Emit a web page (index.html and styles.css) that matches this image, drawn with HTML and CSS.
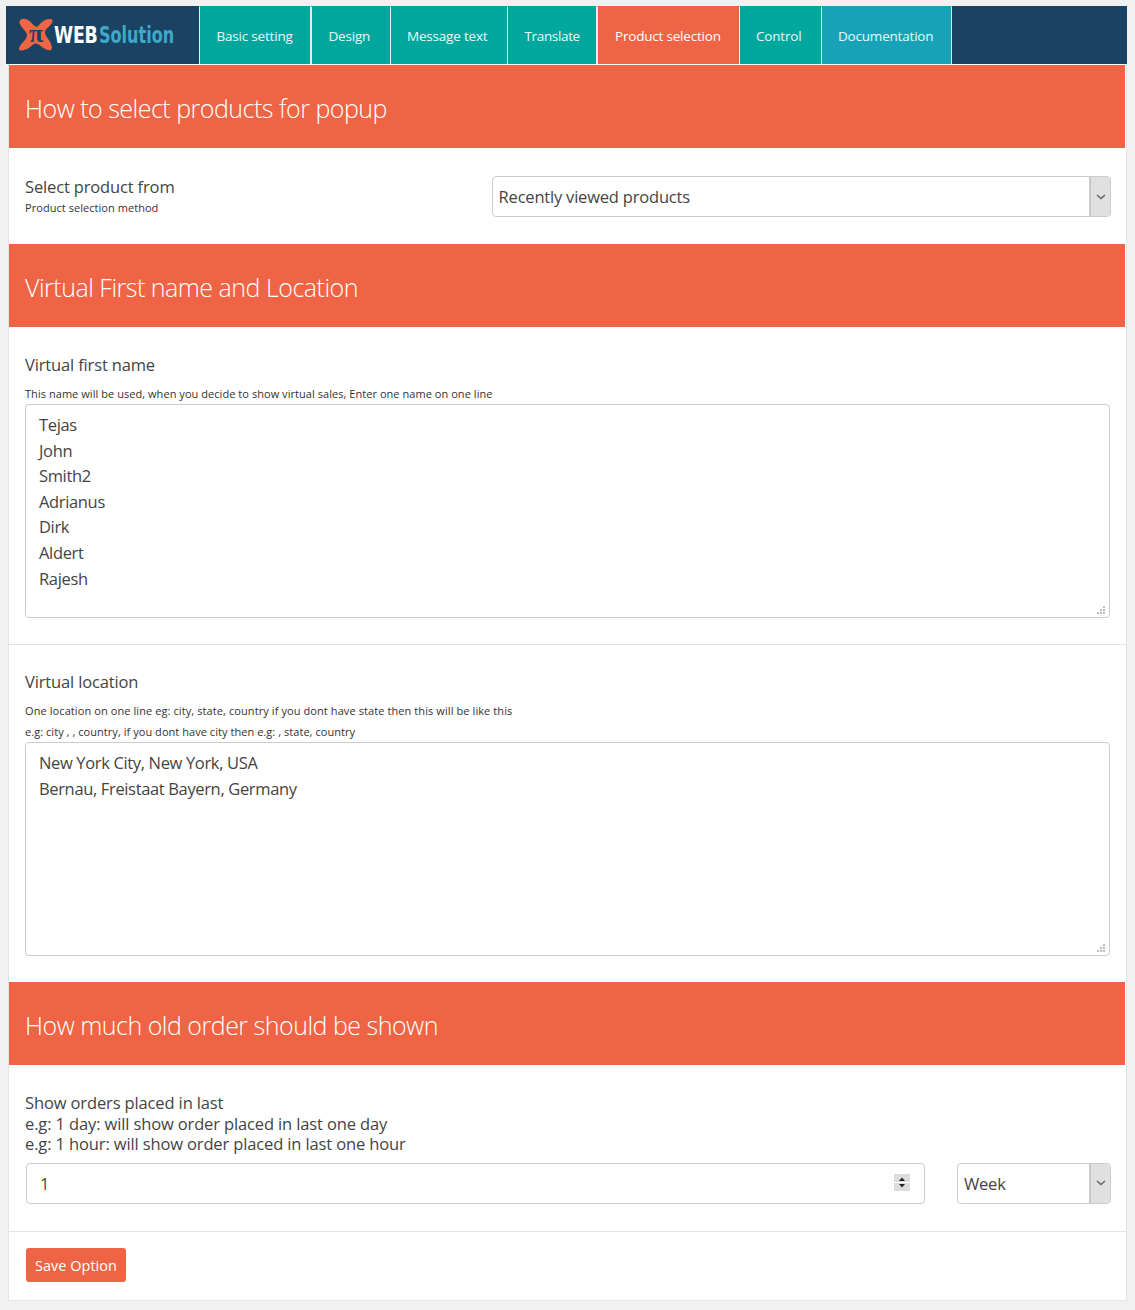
FILE: index.html
```html
<!DOCTYPE html>
<html lang="en">
<head>
<meta charset="utf-8">
<title>Product selection</title>
<link rel="stylesheet" href="styles.css">
</head>
<body>
<div class="page">
  <nav class="nav">
    <a class="logo" href="#">
      <svg class="logo-mark" width="36" height="36" viewBox="0 0 36 36"><path d="M3 2.500C6 .5 11 3 14 6.500C16 8.500 18 10.500 19.500 9.500C22 7.500 24 4 28 2.500C31 1.500 35.500 1.500 34.500 5C33 8.500 28 11.500 27 14.500C26.500 17 29 20 31.500 24C33.500 27.500 35 31.500 33 33C30.500 34 27 32 24 30C21.500 28 19 26 17 26.500C14 27.500 11 32 7.500 32.500C4.500 33.500 2 34 1 32.500C.5 30 4 26 7 23C9 20.500 9.500 18.500 8.500 16C6.500 12.500 2 9 1.500 5.500C1.400 4 2 3 3 2.500Z" fill="#f06543"/><text x="18" y="25" text-anchor="middle" class="logo-pi">π</text></svg>
      <span class="logo-web">WEB</span><span class="logo-sol">Solution</span>
    </a>
    <a class="tab t1" href="#">Basic setting</a>
    <a class="tab t2" href="#">Design</a>
    <a class="tab t3" href="#">Message text</a>
    <a class="tab t4" href="#">Translate</a>
    <a class="tab t5 active" href="#">Product selection</a>
    <a class="tab t6" href="#">Control</a>
    <a class="tab t7 docs" href="#">Documentation</a>
  </nav>
  <form class="panel">
    <h2 class="head">How to select products for popup</h2>
    <div class="row">
      <div class="row-label">
        <label class="label">Select product from</label>
        <small class="hint">Product selection method</small>
      </div>
      <div class="select-wrap wide">
        <select class="select"><option>Recently viewed products</option></select>
        <span class="arrow"><svg width="10" height="6" viewBox="0 0 10 6"><path d="M1 1l4 3.500L9 1" fill="none" stroke="#666" stroke-width="1.500"/></svg></span>
      </div>
    </div>
    <h2 class="head">Virtual First name and Location</h2>
    <div class="field first">
      <label class="label">Virtual first name</label>
      <small class="hint hint-gap">This name will be used, when you decide to show virtual sales, Enter one name on one line</small>
      <textarea class="area" spellcheck="false">Tejas
John
Smith2
Adrianus
Dirk
Aldert
Rajesh</textarea>
    </div>
    <div class="field second">
      <label class="label">Virtual location</label>
      <small class="hint hint-gap">One location on one line eg: city, state, country if you dont have state then this will be like this</small>
      <small class="hint hint-next">e.g: city , , country, if you dont have city then e.g: , state, country</small>
      <textarea class="area" spellcheck="false">New York City, New York, USA
Bernau, Freistaat Bayern, Germany</textarea>
    </div>
    <h2 class="head">How much old order should be shown</h2>
    <div class="orders">
      <p class="lines">Show orders placed in last<br>e.g: 1 day: will show order placed in last one day<br>e.g: 1 hour: will show order placed in last one hour</p>
      <div class="order-inputs">
        <input class="number" type="number" value="1">
        <div class="select-wrap narrow">
          <select class="select"><option>Week</option></select>
          <span class="arrow"><svg width="10" height="6" viewBox="0 0 10 6"><path d="M1 1l4 3.500L9 1" fill="none" stroke="#666" stroke-width="1.500"/></svg></span>
        </div>
      </div>
    </div>
    <div class="actions"><button class="save" type="button">Save Option</button></div>
  </form>
</div>
</body>
</html>
```
FILE: styles.css
```css
* { box-sizing: border-box; }
html, body { margin: 0; padding: 0; }
body {
  background: #f1f1f1;
  color: #444;
  font-family: "Open Sans", "Noto Sans", sans-serif;
  height: 1310px;
  overflow: hidden;
}
.page { padding: 6px 8px 0 6px; }
.nav {
  display: flex;
  height: 59px;
  background: #1a4363;
  border-bottom: 1px solid #fff;
  width: 1121px;
}
.logo {
  width: 193px;
  display: flex;
  align-items: center;
  padding-left: 12px;
  text-decoration: none;
  font-family: "DejaVu Sans Condensed", "DejaVu Sans", sans-serif;
  font-size: 23.500px;
  line-height: 1;
}
.logo-mark { flex: none; }
.logo-pi { font: 700 26px "Liberation Serif", serif; fill: #1a4363; }
.logo-web { color: #fff; font-weight: 700; letter-spacing: -.3px; transform: translateY(1px) scaleX(.82); transform-origin: left; width: 45px; }
.logo-sol { color: #3fa9c9; font-weight: 700; transform: translateY(1px) scaleX(.76); transform-origin: left; }
.tab {
  display: flex;
  align-items: center;
  background: #00a79d;
  border-left: 1px solid #e4eeee;
  border-top: 1px solid #00a79d;
  padding-left: 16px;
  color: #e8fbfa;
  text-decoration: none;
  font-size: 13.500px;
  letter-spacing: -.2px;
  white-space: nowrap;
}
.t1 { width: 111px; padding-left: 16.500px; }
.t2 { width: 80px; border-left-width: 2px; padding-left: 16.500px; }
.t3 { width: 117px; }
.t4 { width: 89px; letter-spacing: -.35px; padding-left: 16.500px; }
.t5 { width: 143px; border-left-width: 2px; padding-left: 17px; }
.t6 { width: 82px; }
.t7 { width: 131px; border-right: 1px solid #e4eeee; }
.active { background: #ef6445; border-top-color: #ef6445; color: #fff; }
.docs { background: #17a2b8; border-top-color: #17a2b8; }
.panel {
  width: 1119px;
  height: 1236px;
  margin-left: 2px;
  background: #fff;
  border: 1px solid #e2e4e7;
  border-top: 0;
}
.head {
  margin: 0 1px 0 0;
  height: 83px;
  padding-left: 16px;
  background: #ef6445;
  color: #fff;
  font-size: 25px;
  font-weight: 300;
  letter-spacing: -.5px;
  line-height: 87px;
}
.label { display: block; font-size: 16.500px; letter-spacing: -.15px; color: #444; line-height: 22px; }
.hint { display: block; font-size: 11px; letter-spacing: .05px; color: #333; line-height: 21px; }
.row {
  height: 96px;
  display: flex;
  align-items: flex-start;
  padding: 28px 15px 0 16px;
}
.row-label { width: 467px; }
.row-label .hint { line-height: 20px; }
.select-wrap { position: relative; height: 41px; }
.wide { width: 620px; }
.narrow { width: 154px; margin-right: -1px; }
.select {
  appearance: none;
  -webkit-appearance: none;
  width: 100%;
  height: 100%;
  background: #fff;
  border: 1px solid #ccc;
  border-radius: 4px;
  padding: 0 24px 0 6px;
  color: #444;
  font: inherit;
  font-size: 16.500px;
  letter-spacing: -.2px;
}
.arrow {
  position: absolute;
  top: 1px;
  right: 1px;
  bottom: 1px;
  width: 21px;
  display: flex;
  align-items: center;
  justify-content: center;
  background: #e0e0e0;
  border-left: 2px solid #c8c8c8;
  border-radius: 0 3px 3px 0;
  pointer-events: none;
}
.field { padding: 0 16px; }
.first { height: 318px; padding-top: 27px; border-bottom: 1px solid #e2e4e7; }
.second { height: 337px; padding-top: 26px; }
.first .hint-gap { margin-top: 8px; line-height: 20px; }
.second .hint-gap { margin-top: 7px; line-height: 21px; letter-spacing: .09px; }
.hint-next { line-height: 21px; }
.area {
  display: block;
  width: 1085px;
  height: 214px;
  padding: 7px 13px;
  border: 1px solid #ccc;
  border-radius: 4px;
  color: #444;
  font: inherit;
  font-size: 16.500px;
  letter-spacing: -.35px;
  line-height: 25.600px;
}
.area::-webkit-resizer {
  background: url("data:image/svg+xml,%3Csvg xmlns='http://www.w3.org/2000/svg' width='15' height='15'%3E%3Cg fill='%23bbb'%3E%3Crect x='9' y='4' width='2' height='2'/%3E%3Crect x='6' y='7' width='2' height='2'/%3E%3Crect x='9' y='7' width='2' height='2'/%3E%3Crect x='3' y='10' width='2' height='2'/%3E%3Crect x='6' y='10' width='2' height='2'/%3E%3Crect x='9' y='10' width='2' height='2'/%3E%3C/g%3E%3C/svg%3E") no-repeat;
}
.orders { height: 167px; padding: 28px 16px 0; border-bottom: 1px solid #e2e4e7; }
.lines { margin: 0; font-size: 16.500px; letter-spacing: -.13px; line-height: 20.500px; color: #444; }
.order-inputs { display: flex; justify-content: space-between; margin-top: 8px; padding-left: 1px; }
.number {
  width: 899px;
  height: 41px;
  padding: 0 14px 0 13px;
  border: 1px solid #ccc;
  border-radius: 4px;
  color: #444;
  font: inherit;
  font-size: 16.500px;
}
.number::-webkit-inner-spin-button {
  -webkit-appearance: none;
  opacity: 1;
  width: 16px;
  height: 17px;
  margin-top: 2px;
  background: url("data:image/svg+xml,%3Csvg xmlns='http://www.w3.org/2000/svg' width='16' height='17'%3E%3Crect width='16' height='17' fill='%23ddd'/%3E%3Crect y='8' width='16' height='1' fill='%23fff'/%3E%3Cpath d='M8 3.500l3 3.500H5zM8 13.500L5 10h6z' fill='%23222'/%3E%3C/svg%3E") no-repeat;
}
.actions { padding: 16px 17px; }
.save {
  display: block;
  width: 100px;
  height: 34px;
  padding: 0 0 0 0;
  background: #ef6445;
  color: #fff;
  border: 0;
  border-radius: 3px;
  font: inherit;
  font-size: 14.500px;
}
```
